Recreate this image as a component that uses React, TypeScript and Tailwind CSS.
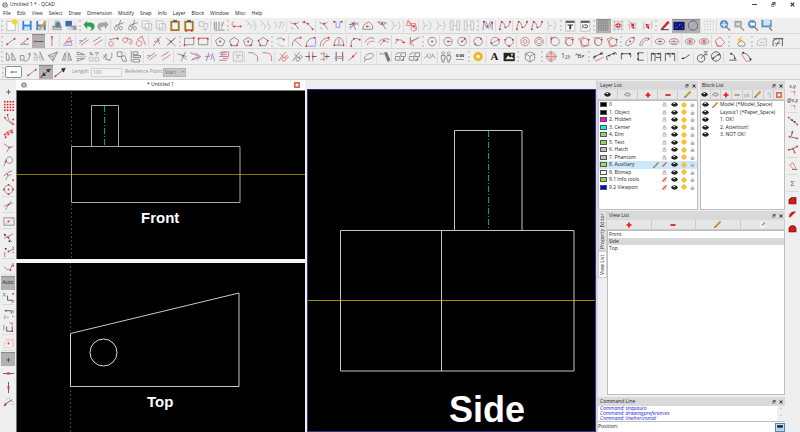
import React from "react";

type Glyph = {
  g?: string;
  l?: string;
  k?: string;
  r?: string;
  b?: string;
  d?: string;
  D?: string;
  f?: [string, string][];
};

const INK: [keyof Glyph, string, number][] = [
  ["l", "#c0c0c0", 1],
  ["g", "#8c8c8c", 1],
  ["k", "#5a5a5a", 1],
  ["b", "#9090f4", 1],
  ["r", "#ee7474", 1],
  ["d", "#f02828", 2],
  ["D", "#3a3a3a", 2],
];

const clip: Glyph["f"] = [
  ["#a8782a", "M2 2h10v11h-10z"],
  ["#f4f4f4", "M4 4h6v7h-6z"],
  ["#5e5e5e", "M5 1h4v2h-4z"],
];
const pentagon = "M7 2.500l5 3.500l-2 5.500h-6l-2-5.500z";
const circle = "M7 2.500a4.500 4.500 0 1 0 .01 0z";

const ICONS: Record<string, Glyph> = {
  new: { f: [["#bdbdbd", "M2 2h10v11h-10z"], ["#fbfbfb", "M3 3h8v9h-8z"], ["#f0dc28", "M11 0a3 3 0 1 0 .01 0z"]] },
  save: { f: [["#3f83d6", "M2 2h10v10h-10z"], ["#f4f8ff", "M4 2h6v4h-6z"], ["#cfe0f5", "M4 8h6v4h-6z"]] },
  saveAs: { f: [["#3f83d6", "M2 2h10v10h-10z"], ["#f4f8ff", "M4 2h6v4h-6z"], ["#cfe0f5", "M4 8h6v4h-6z"], ["#e8a020", "M5 10l6-8l2 1l-6 8l-2 1z"]] },
  print: { f: [["#9a9a9a", "M2 7h10v5h-10z"], ["#cfcfcf", "M4 1h6v6h-6z"], ["#5c88a8", "M8 3a3 3 0 1 0 .01 0z"], ["#e8e8e8", "M3 10h8v1h-8z"]] },
  preview: { f: [["#3d6da8", "M1 2h7v6h-7z"], ["#9d9d9d", "M6 7h7v5h-7z"], ["#d5d5d5", "M3 9h6v3h-6z"]] },
  undo: { f: [["#2e9e4c", "M1 6l4-4v2c5-1 8 1 8 4c0 3-3 5-5 4c3-1 3-4-3-4v3z"]] },
  redo: { f: [["#a6a6a6", "M13 6l-4-4v2c-5-1-8 1-8 4c0 3 3 5 5 4c-3-1-3-4 3-4v3z"]] },
  cut: { g: "M9 1l-3 8M3 7l9-3M4 8a2 2 0 1 0 .01 0zM9 8a1.500 2 0 1 0 .01 0z" },
  copy: { l: "M2 2h7v8h-7zM5 5h7v7h-7z", f: [["#f8f8f8", "M3 3h6v6h-6z"]] },
  paste: { f: clip },
  pasteAt: { f: clip, d: "M4 13h0M10 13h0" },
  link: { l: "M3 3h5v5h-5zM8 5h4v4M6 11l5 0M9 9l2 2l-2 2" },
  prefs: { g: "M2 3v8M4 3v8M7 3v8M2 12h11M12 3l-2 5", l: "M10 3v8" },
  hook: { r: "M4 3c-3 0-3 5 0 5h8", d: "M4 8h0M11 8h0" },
  curves: { l: "M2 2c3 1 3 3 1 5M5 5c3 1 3 3 1 6M9 2c3 1 2 4 0 6M12 6c1 2 0 4-1 6" },
  curves2: { l: "M2 3c3 2 3 4 1 7M7 4l3-1l-3 7M11 3c2 3 1 5-1 7" },
  trimY: { g: "M2 3c2 3 7 3 9 0M7 5l4 6", d: "M7 5h0", b: "M3 9l2 2" },
  trimX: { g: "M1 4c5-1 8 3 11 7", d: "M7 5h0M3 3h0M12 11h0" },
  trimU: { b: "M2 3h3v6h4v-6h3", d: "M3 3h0M11 3h0" },
  polyA: { g: "M2 9l10-5M5 3l4 9", k: "M2 6l5-1", b: "M3 11l5-8l4 4", d: "M7 5h0" },
  polyB: { g: "M1 11l2-5l5-3l4 4v4z", b: "M5 8h4", d: "M6 8h0" },
  polyC: { g: "M2 3l9 1M3 3c2 4 5 4 9 1M8 6l3 5", d: "M7 5h0" },
  brackets: { l: "M2 2c3 3 3 7 0 10M5 7h3M9 2c3 3 3 7 0 10" },
  boxes: { l: "M2 2h3v10h-3zM5 7h4M9 2h3v10h-3z" },
  shapes: { r: "M3 1l4 6h-6zM9 7a3 3 0 1 0 .01 0zM5 5h6v4", g: "M3 3l9 9", d: "M9 8h0" },
  spline: { g: "M2 12c1-12 3-12 5-4c2 5 3-1 5-5v9", b: "M3 2l3 8l5-8", d: "M3 3h0M7 8h0M12 4h0" },
  spline2: { g: "M2 11c1-10 4-9 5-4c2 4 4 2 6-4", d: "M2 11h0M4 3h0M8 9h0M13 3h0" },
  textTop: { l: "M2 2h10v11h-10z", f: [["#fff", "M3 3h8v9h-8z"], ["#333", "M2 2h10v2h-10zM4 6h6v1h-6zM6 7h2v4h-2z"]] },
  textMid: { l: "M2 2h10v11h-10z", f: [["#fff", "M3 3h8v9h-8z"], ["#333", "M2 2h10v2h-10zM4 6h1v4h-1zM6 6h4v1h-4zM6 9h4v1h-4zM9 6h1v4h-1z"]] },
  gridOn: { g: "M2 2v10M4.500 2v10M7 2v10M9.500 2v10M12 2v10M2 2h10M2 4.500h10M2 7h10M2 9.500h10M2 12h10" },
  iso: { l: "M1 3h12M1 7h12M1 11h12M3 1v12M7 1v12M11 1v12", f: [["#e81818", "M5 5l2-1l2 1v1h2v2h-2v1l-2 1l-2-1v-1h-2v-2h2z"]] },
  isoL: { l: "M2 2l10 4M2 6l10 4M4 2v10M10 3v9", f: [["#e81818", "M6 4l3 2v5l-3-2z"]] },
  isoR: { l: "M3 3v9M12 2v9M2 10l10-5", f: [["#e81818", "M5 5l4 1v5l-3-2z"]] },
  redPen: { f: [["#d92222", "M3 10l7-8l2 2l-7 7l-3 1z"], ["#333", "M3 11h8v1h-8z"]] },
  draft: { f: [["#10107a", "M1 3h12v9h-12z"], ["#8fa0ff", "M3 9h1v1h-1zM5 8h1v1h-1zM7 6h1v1h-1zM9 5h1v1h-1zM3 5h1v1h-1zM10 9h1v1h-1z"]] },
  ortho: { k: "M7 2a5 5 0 1 0 .01 0z", b: "M2 12l10-10" },
  dots: { f: [["#aaa", "M2 2h1v1h-1zM5 2h1v1h-1zM8 2h1v1h-1zM11 2h1v1h-1zM2 5h1v1h-1zM5 5h1v1h-1zM8 5h1v1h-1zM11 5h1v1h-1zM2 8h1v1h-1zM5 8h1v1h-1zM8 8h1v1h-1zM11 8h1v1h-1zM2 11h1v1h-1zM5 11h1v1h-1zM8 11h1v1h-1zM11 11h1v1h-1z"]] },
  zoomFit: { f: [["#8b7355", "M8 9l1-1l4 4l-1 1z"], ["#5b8fc8", "M6 1a4.500 4.500 0 1 0 .01 0z"], ["#cfe4f7", "M5 3h2v2h2v2h-2v2h-2v-2h-2v-2h2z"]] },
  zoomSel: { f: [["#8b8b8b", "M8 9l1-1l4 4l-1 1z"], ["#a8a8a8", "M2 2h8v7h-8z"], ["#e0e0e0", "M4 4h4v3h-4z"]] },
  zoomPrev: { f: [["#8b7355", "M8 9l1-1l4 4l-1 1z"], ["#5b8fc8", "M6 1a4.500 4.500 0 1 0 .01 0z"], ["#fff", "M3 5l3-2v1h3v3h-3v1z"]] },
  zoomWin: { f: [["#8b7355", "M9 10l1-1l3 3l-1 1z"], ["#5b8fc8", "M1 1h11v8h-11z"], ["#cfe4f7", "M3 4a4 3 0 1 1 7 1v2h-7z"]] },

  line: { g: "M3 10l8-6", d: "M3 10h0M11 4h0" },
  lineAng: { g: "M2 10h9M3 10l7-6", d: "M10 4h0", r: "M6 8l1 2" },
  lineH: { k: "M3 7h9", d: "M3 7h0" },
  lineV: { g: "M7 2v10", d: "M7 2h0", r: "M7 3v2" },
  lineAngle: { r: "M3 10l6-8l2 8M5 7h6", b: "M2 11h10M5 9l7-3" },
  para: { g: "M2 9l8-6", r: "M4 11l8-6", b: "M2 6h3" },
  para2: { g: "M2 7l8-5", r: "M3 11l9-6" },
  tanA: { r: "M4 7a2.500 2.500 0 1 0 .01 0z", g: "M2 5l10-2", d: "M11 4h0" },
  tanB: { r: "M4 3a2.500 2.500 0 1 0 .01 0zM10 7a1.500 1.500 0 1 0 .01 0z", g: "M5 3l7 3" },
  tanC: { r: "M5 6a3 3 0 1 0 .01 0zM8 1l4 10", g: "M3 5l6-4" },
  bisA: { g: "M3 12l8-10M10 10l-3-7", r: "M4 7l6-1" },
  bisB: { g: "M2 3l10 9", k: "M3 11l9-8", d: "M7 7h0" },
  rect: { g: "M2 3.500h10v7h-10z", d: "M2 11h0M12 3h0" },
  rectR: { g: "M2 3.500h10v7h-10z", r: "M2 3.500h9", d: "M2 4h0M12 4h0" },
  pentC: { g: pentagon, d: "M7 7h0" },
  pentE: { g: pentagon, d: "M4 11h0M10 11h0" },
  pentD: { g: pentagon, d: "M7 7h0M10 11h0" },
  pentS: { g: pentagon, d: "M2 6h0M12 6h0M4 11h0" },
  arc0: { g: "M3 5c2-3 5-2 7 0", d: "M10 5h0", l: "M3 9l4 3h4" },
  arc1: { g: "M2 12c0-6 4-9 9-9", r: "M4 5l8 7", d: "M11 3h0" },
  arc2: { g: "M2 12c0-6 4-9 9-9", b: "M3 12h9M12 4v7", d: "M11 3h0M2 12h0" },
  arc3: { g: "M2 12c0-6 4-9 9-9", r: "M5 12c0-4 3-6 7-7", d: "M11 3h0" },
  arc4: { g: "M2 11c0-11 10-11 10 0z", r: "M7 4v7", d: "M2 11h0M12 11h0" },
  arc5: { g: "M3 12c-1-8 4-10 9-7", d: "M3 12h0M6 4h0M12 5h0" },
  arcO: { g: "M2 8c2-5 7-6 10-4", r: "M4 11c1-4 5-5 8-4" },
  arcO2: { g: "M1 8c3-4 8-5 12-3", r: "M3 11c2-5 6-5 9-3", d: "M7 6h0" },
  tArc: { g: "M2 9c3-6 7-4 9-1", d: "M11 8h0M4 5h0", r: "M9 8h4" },
  tArc2: { g: "M3 2c0 5 1 8 4 10M3 7l9-4", r: "M4 8l9-6M3 3v8" },
  circC: { g: circle, d: "M7 7h0" },
  circB: { g: circle, b: "M7 7h4", d: "M7 7h0" },
  circR: { g: circle, r: "M7 7l3-3", d: "M7 7h0M10 4h0" },
  circ2: { g: circle, d: "M4 10h0M10 4h0" },
  circD: { g: circle, b: "M3 9l8-4", d: "M3 9h0M11 5h0" },
  circ3: { g: circle, d: "M3 5h0M11 5h0M7 12h0" },
  circO: { r: circle, g: "M7 5a2 2 0 1 0 .01 0z" },
  ringG: { g: circle, r: "M7 4.500a2.500 2.500 0 1 0 .01 0z" },
  circT: { g: circle, r: "M2 2l4 1M3 3v5", d: "M3 4h0" },
  circT2: { g: "M7 3.500a4 4 0 1 0 .01 0z", r: "M2 3h10M4 4c-1 4 0 6 2 7", d: "M11 5h0" },
  circT3: { g: "M8 3.500a4 4 0 1 0 .01 0z", r: "M1 5l6-3M2 4l3 9l8-2", d: "M12 5h0" },
  ell1: { g: "M3 11c-3-2 4-10 8-8c3 2-4 10-8 8z", d: "M7 7h0M11 3h0" },
  ell2: { g: "M3 12c-2-3 4-11 9-8", r: "M5 12c-1-2 3-8 6-6", d: "M12 4h0" },
  ell3: { g: "M7 4c7 0 7 6 0 6c-7 0-7-6 0-6z", b: "M4 7h6", d: "M7 7h0" },
  ell4: { g: "M7 4c7 0 7 6 0 6c-7 0-7-6 0-6z", r: "M3 7h8M7 5v4", b: "M4 10h6" },
  ell5: { g: "M7 4c7 0 7 6 0 6c-7 0-7-6 0-6z", r: "M7 5.500c4 0 4 3 0 3c-4 0-4-3 0-3z", d: "M7 7h0" },
  diamond: { r: "M2 6l5-4l5 6l-4 4h-4z", g: "M2 7l3 5h4" },
  hand: { g: "M5 12l-1-3l4-3l4 3l-1 3z", f: [["#f0c020", "M3 6l6-5l-2 4h3l-6 4l2-3h-3z"]] },
  hatchL: { l: "M2 11l1-5l4-2h5v7zM5 8h5" },
  hatchD: { k: "M2 12v-6l4-2h6v8M2 4h11M5 12l4-6", g: "M4 9h6" },

  move: { g: "M2 3v8h3v-5l-3-3M8 3v8h4l-4-8" },
  rotate: { g: "M2 6h4v5h-4zM6 12c5 0 6-3 6-8M10 5l2-2l1 3" },
  scale: { l: "M2 3v8h3v-5zM8 2v9h4zM3 8h8", g: "M2 3l3 3M8 2l4 9" },
  shear: { g: "M2 6l10-4l-5 10zM2 6l5 1l5-5M7 7v5" },
  mirror: { g: "M2 11l3-8v8zM12 11l-3-8v8z", l: "M7 1v12" },
  flip: { g: "M3 2l8 3h-8zM3 12l8-3h-8z", l: "M1 7h12" },
  arr: { l: "M2 8h4v4h-4zM8 8h4v4h-4z", g: "M3 2l3 3h-3zM8 3h4l-3 3" },
  stretch: { g: "M2 9l3-5v6l5 1M11 3c1 5-1 7-4 8", l: "M2 5l3 6" },
  copyTo: { g: "M2 2h5v5h-5zM6 7l2 5h4l-2-6z", l: "M9 2l3 3" },
  align: { g: "M2 1v12M4 2h5v3h-5zM4 6h8v2h-8zM4 10h7v3h-7z" },
  trimA: { g: "M2 4l10 3M6 12l5-10", b: "M7 7l5 3", d: "M8 6h0" },
  trimB: { g: "M1 3l8 3M2 11l10-4", b: "M6 3l6 4l-4 4", r: "M3 10l7-3" },
  trimC: { g: "M3 12l3-9M2 7h4", b: "M8 11l2-8M10 5l2 7", r: "M5 8l3-3" },
  offset: { g: "M2 3h8M2 7h8M2 11h8", r: "M5 2h7v5h-7zM6 9h6", b: "M3 5h7" },
  number: { l: "M2 2h10v10h-10zM4 4l4 5M9 4l-4 6M5 6h6" },
  bevel: { g: "M2 3h5M12 12v-5", r: "M7 3l5 4" },
  round: { g: "M2 3h4M12 12v-3", r: "M6 3c4 0 6 2 6 6" },
  scis: { g: "M2 12l8-10", r: "M4 4l5 5M8 8a2 2 0 1 0 .01 0zM11 6a1.500 1.500 0 1 0 .01 0z" },
  scisG: { g: "M2 12l8-10M4 4l5 5M8 8a2 2 0 1 0 .01 0zM11 6a1.500 1.500 0 1 0 .01 0z" },
  breakA: { k: "M1 7h4M9 7h4", g: "M5 2v10M9 2v10", d: "M5 7h0M9 7h0" },
  breakB: { r: "M2 4h4M2 10h4", k: "M7 7h5", g: "M6 2v10M9 4v6" },
  breakC: { k: "M4 2v10M11 2v10", b: "M2 9h10", r: "M3 7h9" },
  breakD: { g: "M2 12l10-10", d: "M7 7h0", r: "M5 9l4-4" },
  lasso: { g: "M3 10c-3-2 4-8 8-6c3 4-5 7-8 6zM3 10l-1 3" },
  torch: { f: [["#777", "M6 3l3-1l4 9l-3 2z"], ["#b5b5b5", "M1 3h4l1 2h-5z"]] },
  reorder: { g: "M2 7h5v4h-5zM8 3h5v4h-5zM2 5l3-2h2", k: "M8 11h3v-3" },
  spray: { g: "M1 9l3-3l3 3l3-3l3 3M4 6v-2M10 6v-2M7 4l1 2" },
  people: { g: "M4 2a1.500 1.500 0 1 0 .01 0zM10 2a1.500 1.500 0 1 0 .01 0zM2 6h4v4h-1v3h-2v-3h-1zM8 6h4v4h-1v3h-2v-3h-1z" },
  ring: { f: [["#eeb81c", "M7 2a5 5 0 1 0 .01 0zM7 5a2 2 0 1 1-.01 0z"]] },
  image: { f: [["#222", "M1 3h12v9h-12z"], ["#eee", "M3 10l3-4l2 2l2-1l2 3z"], ["#eee", "M9 4h2v2h-2z"]] },
  cube: { g: "M7 2l5 2v6l-5 3l-5-3v-6zM2 4l5 3l5-3M7 7v6" },
  target: { g: "M7 2a5 5 0 1 0 .01 0z", r: "M1 7h12M7 1v12M7 4a3 3 0 1 0 .01 0z" },
  dimA: { r: "M4 12l9-4", k: "M2 8l10-5M2 7l1 3M11 2l1 3", D: "M4 7h0M10 4h0" },
  dimB: { k: "M2 11l-1-4l9-4M10 2l2 3", D: "M4 6h0M9 4h0" },
  dimC: { k: "M2 10v-6h10v4", D: "M3 4h0M11 4h0" },
  dimD: { k: "M11 3h-6v8h6", D: "M5 4h0M5 10h0" },
  dimE: { k: "M2 12v-9M6 4v8M12 12v-9M2 4h10M7 8h5", D: "M4 4h0M10 4h0" },
  dimF: { k: "M2 12v-9M7 8v-5M12 12v-9M2 4h10", D: "M5 4h0M10 4h0" },
  leader: { k: "M2 9h3l6-4", D: "M4 9h0" },
  dimR: { k: "M6 5a4 4 0 1 0 .01 0zM6 9l6-6M9 2h4M10 5h3" },
  dimDia: { k: "M7 2a5 5 0 1 0 .01 0zM3 9l8-5", D: "M4 9h0M10 5h0" },
  dimAng: { k: "M4 11h8M6 4c3 0 4 3 4 6", D: "M6 4h0M10 9h0" },
  dimArc: { r: "M2 4l5 8h4", k: "M3 3c5 0 8 4 9 9", D: "M4 3h0M12 10h0" },

  plusK: { k: "M7 5v5M4.500 7.500h5" },
  grid9: { d: "M3 3h0M6 3h0M9 3h0M12 3h0M3 6h0M6 6h0M9 6h0M12 6h0M3 9h0M6 9h0M9 9h0M12 9h0M3 12h0M6 12h0M9 12h0M12 12h0" },
  snapEnd: { g: "M6 2c0 5 3 8 6 9M3 6l8 6", d: "M6 2h0M12 7h0M12 12h0M3 5h0" },
  snapOn: { r: "M2 9c2-3 6-5 10-6M3 12c1-4 4-6 9-7", d: "M3 8h0M6 6h0M10 4h0M4 11h0M7 8h0M11 6h0" },
  snapPerp: { g: "M2 3l6 4l4-1M8 7l-3 5", d: "M8 7h0" },
  snapTan: { g: "M8 2a3.500 3.500 0 1 0 .01 0zM2 12l3-7", d: "M4 7h0" },
  snapMid: { g: "M2 8c2-4 6-5 9-6M4 12c1-4 3-5 6-6", d: "M6 6h0M12 12h0" },
  snapCen: { g: circle, d: "M7 7h0M7 2h0M7 12h0M2 7h0M12 7h0" },
  snapInt: { g: "M2 8l10-4M4 12c1-4 4-7 6-10", d: "M7 6h0" },
  snapRef: { g: "M2 3h11v8h-11z", l: "M3 10l8-6", d: "M7 7h0" },
  snapX: { g: "M2 8l10-5M2 3l9 9", D: "M3 4h0M8 11h0", d: "M7 7h0" },
  snap12: { g: "M7 7l4-2M3 8v5M2 9l1-1M11 2l2 1l-2 2h2M11 8h2", D: "M4 4h0", d: "M7 7h0" },
  snapD: { g: "M2 6l3 3M5 9h3M9 9l3-7", d: "M9 10h0M12 5h0" },
  xy: { k: "M6 5v5h6", g: "M1 2l3 4M4 2l-3 4M10 10l3 3M13 10l-3 3", d: "M12 3h0" },
  polar: { k: "M4 4h6v3", g: "M3 9v4M5 11h2M12 3v4M11 10h2", d: "M4 4h0" },
  polar2: { k: "M5 6v5h6v-5", g: "M2 4v6M8 2h3v3", d: "M11 11h0" },
  lockRel: { d: "M7 7h0", f: [["#f8c8c8", "M4 2h9v9h-2v-7h-7zM2 5h7v1h-6v5h6v1h-7z"]] },
  resH: { k: "M1 7h12", d: "M7 7h0M6 7h2" },
  resV: { k: "M7 1v12", d: "M7 7h0M7 6v2" },
  resA: { k: "M3 10l8-5", l: "M4 2l2 3M8 2v3M13 10h-3M12 7h-2", d: "M3 11h0M4 10h0" },
  distA: { k: "M3 4l8 6", d: "M2 3h0M12 11h0", D: "M6 6h0M9 8h0" },
  distB: { k: "M3 9l9 2M7 2l-2 6", d: "M3 9h0M12 11h0M6 4h0" },
  distC: { k: "M2 8l4-1l6-3M7 7l2 4", d: "M2 8h0M12 4h0M7 7h0M9 11h0" },
  angM: { r: "M3 6l4-3l4 8M3 6l5 5", k: "M6 11h6" },
  areaA: { f: [["#222", "M1 13v-7l4-4h8v11z"], ["#ee1111", "M2 12v-5l4-4h6v9z"]] },
  areaB: { f: [["#ee1111", "M2 11c0-6 4-9 10-8l-9 9z"]], k: "M2 11c0-6 4-9 10-8" },
  areaC: { f: [["#222", "M1 13v-6c1-7 11-7 12 0v6z"], ["#ee1111", "M2 12v-5c1-5 9-5 10 0v5z"]] },
  coordA: { r: "M3 4.500h7v7", d: "M10 5h0" },
  shape: { k: "M4 7h7", d: "M4 7h0" },
  arrows: { k: "M2 11l10-8", f: [["#111", "M3 11l1-4l3 3zM12 3l-5 1l3 3z"]], d: "M2 12h0" },
  arrowEnd: { k: "M2 11l10-8", f: [["#111", "M13 2l-5 1l3 4z"]], d: "M2 11h0" },
  eye: { f: [["#262626", "M0 7c4-6 10-6 14 0c-4 6-10 6-14 0z"], ["#fff", "M5 4h3v2h-3z"]] },
  eyeOff: { f: [["#a9a9a9", "M0 7c4-6 10-6 14 0c-4 6-10 6-14 0z"], ["#e9e9e9", "M4 6h6v2h-6z"]] },
  plus: { f: [["#dd1a1a", "M5 1h4v4h4v4h-4v4h-4v-4h-4v-4h4z"]] },
  minus: { f: [["#dd1a1a", "M1 5h12v4h-12z"]] },
  minusG: { f: [["#999", "M1 5h12v4h-12z"]] },
  pencil: { f: [["#c99335", "M2 10l8-9l3 3l-8 8z"], ["#5b4326", "M2 10l3 2l-5 2z"], ["#d86464", "M10 1l3 3l1-2l-2-2z"]] },
  pencilBox: { f: [["#fafafa", "M3 2h8v11h-8z"], ["#c99335", "M5 8l5-6l3 2l-6 6z"]] },
  ab: { g: "M1 6h4v5h-4zM8 2v9h4v-5h-4" },
  insert: { g: "M3 2h7v10h-3M4 5h3" },
  close: { f: [["#e2694b", "M0 0h14v14h-14z"], ["#fff", "M4 4h6v6h-6z"]] },
  printer: { f: [["#c5c5c5", "M3 1h8v5h2v7h-12v-7h2z"], ["#fff", "M4 8h6v2h-6z"]] },
  noPrint: { f: [["#dcdcdc", "M3 1h8v5h2v7h-12v-7h2z"], ["#e33", "M0 12l12-12l2 2l-12 12z"]] },
  sun: { f: [["#f4c238", "M6 0h2l1 3l3-1l-1 3l3 1v2l-3 1l1 3l-3-1l-1 3h-2l-1-3l-3 1l1-3l-3-1v-2l3-1l-1-3l3 1z"]] },
  lock: { f: [["#b5b5b5", "M2 6h10v8h-10z"]], l: "M4 6v-4h6v4" },
  float: { f: [["#333", "M4 1h9v8h-3v-1h2v-4h-7v1h-1zM1 5h8v8h-8zM2 8v4h6v-4z"]] },
  x: { f: [["#222", "M1 3l2-2l4 4l4-4l2 2l-4 4l4 4l-2 2l-4-4l-4 4l-2-2l4-4z"]] },
  keyboard: { f: [["#111", "M2 4h10v4h-10z"], ["#6fa2d6", "M2 10h10v1h-10z"]] },
  logo: { f: [["#4b5878", "M7 1a6 6 0 1 0 .01 0z"], ["#e9edf6", "M7 3a4 4 0 1 0 .01 0z"], ["#4468b0", "M6 5h2v4h-2z"], ["#e5a03a", "M8 8l2-1l4 5l-2 1z"]] },
};

function Icon({ name, className }: { name: string; className: string }) {
  const g = ICONS[name];
  return (
    <svg viewBox="0 0 14 14" aria-hidden="true" className={className}>
      {g.f?.map(([c, d], i) => <path key={i} d={d} fill={c} fillRule="evenodd" />)}
      {INK.map(([k, c, w]) =>
        g[k] ? (
          <path key={k} d={g[k] as string} fill="none" stroke={c} strokeWidth={w} strokeLinecap={w > 1 ? "round" : "butt"} />
        ) : null
      )}
    </svg>
  );
}

const PRESSED = "bg-[#b2b2b2] shadow-[inset_0_1px_1px_#888]";

/* Glyphs that are set as type rather than drawn */
const LETTERS: Record<string, { text: string; cls: string }> = {
  "#A": { text: "A", cls: "font-['Liberation_Serif',serif] text-[11px] font-bold" },
  "#123": { text: "1₂₃", cls: "text-[7px] text-[#444]" },
  "#abc": { text: "ᴬBᴘ", cls: "text-[6px] text-[#444]" },
  "#0.00": { text: "0.00", cls: "text-[4px] font-bold border-b border-[#99a]" },
};

function Tool({ name, pressed }: { name: string; pressed?: boolean }) {
  const t = LETTERS[name];
  return (
    <button
      aria-label={name}
      className={`flex h-[14px] min-w-0 flex-1 items-center justify-center ${pressed ? PRESSED : ""}`}
    >
      {t ? <span className={t.cls}>{t.text}</span> : <Icon name={name} className="h-[13px] w-full shrink-0" />}
    </button>
  );
}

/* "|" is a separator; a leading "*" marks a pressed tool */
function Group({ items, width }: { items: string; width: string }) {
  return (
    <div className={`flex shrink-0 items-center ${width}`}>
      <span className="mr-px ml-px h-[11px] w-[2px] shrink-0 border-l-2 border-dotted border-[#cfcfcf]" />
      {items.split(" ").map((n, i) =>
        n === "|" ? (
          <span key={i} className="h-3 w-[2px] shrink-0 border-l border-[#dadada]" />
        ) : (
          <Tool key={i} name={n.replace("*", "")} pressed={n.startsWith("*")} />
        )
      )}
    </div>
  );
}

const ROW1: [string, string][] = [
  ["w-[78px]", "new | save saveAs | print preview"],
  ["w-[148px]", "undo redo | cut cut copy copy paste pasteAt link | prefs"],
  ["w-[250px]", "hook curves curves curves2 | trimY trimX | trimY trimU | polyA polyB polyC brackets | shapes | brackets brackets boxes boxes"],
  ["w-[83px]", "spline | spline2 | spline2 spline2 brackets"],
  ["w-[33px]", "textTop textMid"],
  ["w-[62px]", "*gridOn iso isoL isoR"],
  ["w-[120px]", "redPen *draft *ortho | dots | zoomFit zoomSel zoomPrev zoomWin"],
];
const ROW2: [string, string][] = [
  ["w-[178px]", "line lineAng *lineH lineV | lineAngle | para para2 | tanA tanB tanC | bisA bisB"],
  ["w-[92px]", "rect rectR | pentC pentE pentD pentS"],
  ["w-[151px]", "arc0 | arc1 arc2 arc3 arc4 | arc5 | arcO arcO2 | tArc tArc2"],
  ["w-[198px]", "circC | circB circR | circ2 | circD circ3 | circO ringG | circT circT2 circT3 circT2 circT3"],
  ["w-[108px]", "ell1 ell2 | ell3 ell4 | ell5 ell5 | diamond"],
  ["w-[23px]", "hand"],
  ["w-[35px]", "hatchL hatchD"],
];
const ROW3: [string, string][] = [
  ["w-[467px]", "move rotate scale shear mirror flip arr stretch copyTo align | para para2 | trimA trimB trimC offset number | bevel round | scis scisG breakA breakB breakC breakD | lasso | torch | reorder reorder | spray | people #0.00"],
  ["w-[49px]", "ring | #A image"],
  ["w-[24px]", "cube"],
  ["w-[47px]", "target #123 #abc"],
  ["w-[166px]", "dimA dimB dimC dimD | dimE dimF | leader | dimR dimDia | dimAng dimArc"],
];

function ToolRow({ groups, height }: { groups: [string, string][]; height: string }) {
  return (
    <div className={`flex items-center overflow-hidden border-b border-[#d6d6d6] ${height}`}>
      {groups.map(([w, items], i) => <Group key={i} width={w} items={items} />)}
    </div>
  );
}

const MENUS = ["File", "Edit", "View", "Select", "Draw", "Dimension", "Modify", "Snap", "Info", "Layer", "Block", "Window", "Misc", "Help"];

const SNAPS = "plusK grid9 snapEnd snapOn snapPerp snapTan snapMid snapCen | snapInt | snapRef | snapX snap12 | snapD | *auto xy | polar polar2 | lockRel | *plusK resH resV resA".split(" ");

const LAYERS: [string, string, string][] = [
  ["0", "bg-black", "printer"],
  ["1. Object", "bg-black", "printer"],
  ["2. Hidden", "bg-[#ff00ff]", "printer"],
  ["3. Center", "bg-[#00f0f0]", "printer"],
  ["4. Dim", "bg-[#92d36e]", "printer"],
  ["5. Text", "bg-[#92d36e]", "printer"],
  ["6. Hatch", "bg-[#bdbdbd]", "printer"],
  ["7. Phantom", "bg-[#bdbdbd]", "printer"],
  ["8. Auxiliary", "bg-[#a9dc4a]", "noPrint"],
  ["9. Bitmap", "bg-white", "printer"],
  ["9.1 Info tools", "bg-[#92d36e]", "noPrint"],
  ["9.2 Viewport", "bg-[#0000ff]", "noPrint"],
];

const BLOCKS = ["Model (*Model_Space)", "Layout1 (*Paper_Space)", "1. OK!", "2. Attention!", "3. NOT OK!"];

function DockTitle({ title }: { title: string }) {
  return (
    <header className="flex h-[9px] shrink-0 items-center gap-[3px] bg-[#d9d9d9] px-[2px]">
      <h2 className="flex-1">{title}</h2>
      <button aria-label="Float"><Icon name="float" className="size-[4px]" /></button>
      <button aria-label="Close"><Icon name="x" className="size-[4px]" /></button>
    </header>
  );
}

function DockTools({ names }: { names: string[] }) {
  return (
    <div className="flex h-[10px] shrink-0 bg-[#e6e6e6]">
      {names.map((n, i) => (
        <button key={i} aria-label={n} className="flex flex-1 items-center justify-center border-r border-b border-[#cacaca]">
          <Icon name={n} className={n.startsWith("eye") || n.startsWith("pencil") ? "size-[7px]" : "size-[6px]"} />
        </button>
      ))}
    </div>
  );
}

const LIST = "border border-[#bdbdbd] bg-white";

function LayerDock() {
  return (
    <section className="flex w-[100px] flex-col">
      <DockTitle title="Layer List" />
      <DockTools names={["eye", "eyeOff", "plus", "minus", "pencil"]} />
      <div className={`flex-1 ${LIST}`}>
        <table className="h-[90px] w-full border-collapse">
          <tbody>
            {LAYERS.map(([name, color, print]) => {
              const on = name.startsWith("8.");
              return (
                <tr key={name} className={on ? "bg-[#cce8ff]" : ""}>
                  <td className="w-[9px] p-0 pl-px"><span className={`block h-[5px] w-[7px] border border-[#555] ${color}`} /></td>
                  <td className="p-0 pl-px leading-[7px] whitespace-nowrap">{name}</td>
                  <td className="w-[9px] p-0">{on && <Icon name="pencil" className="size-[6px]" />}</td>
                  <td className="w-[9px] p-0"><Icon name={print} className="size-[5px]" /></td>
                  <td className="w-[10px] p-0"><Icon name="eye" className="size-[7px]" /></td>
                  <td className="w-[9px] p-0"><Icon name="sun" className="size-[6px]" /></td>
                  <td className="w-[7px] p-0"><Icon name="lock" className="size-[5px]" /></td>
                </tr>
              );
            })}
          </tbody>
        </table>
      </div>
    </section>
  );
}

function BlockDock() {
  return (
    <section className="flex flex-1 flex-col">
      <DockTitle title="Block List" />
      <DockTools names={["eye", "eyeOff", "plus", "minusG", "ab", "pencil", "insert", "close"]} />
      <div className={`flex-1 ${LIST}`}>
        <ul className="flex h-[37px] flex-col justify-between">
          {BLOCKS.map((b, i) => (
            <li key={b} className="flex items-center leading-[7px] whitespace-nowrap">
              <Icon name="eye" className="ml-px size-[7px]" />
              <span className="w-[11px] pl-[3px]">{i === 0 && <Icon name="pencil" className="size-[6px]" />}</span>
              {b}
            </li>
          ))}
        </ul>
      </div>
    </section>
  );
}

function ViewDock() {
  const tab = "flex w-[9px] items-center justify-center border border-[#cfcfcf] [writing-mode:vertical-rl] rotate-180 whitespace-nowrap";
  return (
    <section className="flex min-h-0 flex-1">
      <div className="flex flex-col" role="tablist">
        <button role="tab" className={`h-[40px] bg-[#e6e6e6] ${tab}`}>Property Editor</button>
        <button role="tab" aria-selected="true" className={`h-[27px] bg-white ${tab}`}>View List</button>
      </div>
      <div className="flex flex-1 flex-col">
        <DockTitle title="View List" />
        <DockTools names={["plus", "minus", "pencil", "pencilBox"]} />
        <ul className={`flex-1 leading-[7px] ${LIST}`}>
          <li className="pl-px">Front</li>
          <li className="bg-[#d9d9d9] pl-px">Side</li>
          <li className="pl-px">Top</li>
        </ul>
      </div>
    </section>
  );
}

function CommandDock() {
  return (
    <section className="flex flex-col">
      <DockTitle title="Command Line" />
      <div className="flex h-[16px] overflow-hidden border-b border-[#bdbdbd] bg-white pl-[2px]">
        <div className="flex-1 text-[#2222dd] italic leading-[5px]">
          <p>Command: snapauto</p>
          <p>Command: drawingpreferences</p>
          <p>Command: linehorizontal</p>
        </div>
        <div className="flex w-[8px] flex-col items-center justify-around bg-[#f0f0f0]">
          <button aria-label="Scroll up" className="leading-[6px]">˄</button>
          <button aria-label="Scroll down" className="leading-[6px]">˅</button>
        </div>
      </div>
      <div className="flex h-[10px] items-center bg-white">
        <label htmlFor="pos">Position:</label>
        <input id="pos" className="min-w-0 flex-1 outline-none" />
        <button aria-label="Keyboard" className="flex h-[9px] w-[10px] items-center justify-center border border-[#4a86c0] bg-[#bfdcf4]">
          <Icon name="keyboard" className="size-[8px]" />
        </button>
      </div>
    </section>
  );
}

const RIGHT_TOOLS = "| distA distB distC | angM |".split(" ");

const viewText = "fill-white font-['Liberation_Sans',Arial,sans-serif] font-bold";

export default function App() {
  return (
    <div className="flex h-screen flex-col overflow-hidden bg-[#efefef] font-['Open_Sans','Noto_Sans',sans-serif] text-[5px] text-[#1c1c1c]">
      <header className="flex h-[9px] shrink-0 items-center bg-white pl-[2px]">
        <Icon name="logo" className="size-[6px]" />
        <h1 className="flex-1 pl-[2px]">Untitled 1 * - QCAD</h1>
        <div className="flex gap-[14px] pr-[5px]">
          <button aria-label="Minimize" className="h-[3px] w-[5px] border-b border-[#444]" />
          <button aria-label="Restore"><Icon name="float" className="size-[5px]" /></button>
          <button aria-label="Close window"><Icon name="x" className="size-[5px]" /></button>
        </div>
      </header>
      <nav className="flex h-[9px] shrink-0 items-center gap-[6px] bg-white pl-[3px]">
        {MENUS.map((m) => <button key={m}>{m}</button>)}
      </nav>
      <ToolRow groups={ROW1} height="h-[16px] shrink-0" />
      <ToolRow groups={ROW2} height="h-[15px] shrink-0" />
      <ToolRow groups={ROW3} height="h-[16px] shrink-0" />
      <form className="flex h-[15px] shrink-0 items-center border-b border-[#cfcfcf] pl-[2px] text-[#8f8f8f]" onSubmit={(e) => e.preventDefault()}>
        <span className="h-[11px] w-[3px] border-l-2 border-dotted border-[#cfcfcf]" />
        <button aria-label="Tool" className="flex h-[12px] w-[17px] items-center justify-center rounded-[2px] border border-[#8f8f8f] bg-white">
          <Icon name="shape" className="size-[12px]" />
        </button>
        <div className="flex w-[45px] shrink-0 pl-[3px]">
          <Tool name="line" />
          <Tool name="arrows" pressed />
          <Tool name="arrowEnd" />
        </div>
        <label htmlFor="len" className="w-[24px] shrink-0 pl-[5px]">Length:</label>
        <input id="len" defaultValue="100" className="h-[9px] w-[31px] border border-[#d2d2d2] bg-[#f3f3f3] pl-px" />
        <label htmlFor="ref" className="w-[41px] shrink-0 pl-[3px] whitespace-nowrap">Reference Point:</label>
        <span className="relative flex">
          <select id="ref" className="h-[9px] w-[23px] appearance-none border border-[#b4b4b4] bg-[#c8c8c8] pl-px text-[#777]">
            <option>Start</option>
          </select>
          <span className="pointer-events-none absolute top-px right-[2px] text-[4px]">▾</span>
        </span>
      </form>

      <div className="flex min-h-0 flex-1">
        <aside className="flex w-[16px] shrink-0 flex-col items-center pt-[4px]">
          {SNAPS.map((n, i) =>
            n === "|" ? (
              <span key={i} className="mb-px h-px w-[12px] shrink-0 bg-[#dadada]" />
            ) : n === "*auto" ? (
              <button key={i} className={`h-[14px] w-[14px] shrink-0 ${PRESSED}`}>Auto</button>
            ) : (
              <button
                key={i}
                aria-label={n}
                className={`flex h-[14px] w-[14px] shrink-0 items-center justify-center ${n.startsWith("*") ? PRESSED : ""}`}
              >
                <Icon name={n.replace("*", "")} className="size-[13px]" />
              </button>
            )
          )}
        </aside>

        <main className="grid min-w-0 flex-1 grid-cols-2 gap-[2px]">
          <div className="flex min-h-0 flex-col">
            <div className="flex h-[10px] shrink-0 items-center bg-white px-[5px]">
              <Icon name="logo" className="size-[6px]" />
              <span className="flex-1 text-center">* Untitled 1</span>
              <button aria-label="Close tab"><Icon name="close" className="size-[6px]" /></button>
            </div>
            <div className="grid min-h-0 flex-1 grid-rows-2 gap-[4px] bg-[#f4f4f4]">
              <svg viewBox="17 91 288 168" preserveAspectRatio="xMinYMin slice" className="h-full min-h-0 w-full border-t border-l border-[#777] bg-black">
                <path d="M0 174.500H400" stroke="#857a00" />
                <path d="M71.500 80V270" stroke="#5a3a10" strokeDasharray="2 2" />
                <path d="M71.500 146.500H240V202.500H71.500zM91.500 146V105.500H118.500V146" fill="none" stroke="#a8a8a8" />
                <path d="M104.500 106V146" stroke="#00a0a0" strokeDasharray="6 2 1 2" />
                <text x="141" y="223" fontSize="15" className={viewText}>Front</text>
              </svg>
              <svg viewBox="17 263 288 169" preserveAspectRatio="xMinYMin slice" className="h-full min-h-0 w-full border-l border-[#777] bg-black">
                <path d="M70.500 250V440" stroke="#5a3a10" strokeDasharray="2 2" />
                <path d="M70.500 333.500L239 293V386.500H70.500z" fill="none" stroke="#c9c9c9" />
                <path d="M70.500 334V386" stroke="#e9e0a0" strokeDasharray="2 2" />
                <circle cx="103.500" cy="352.500" r="13.500" fill="none" stroke="#dcdcdc" />
                <text x="147" y="407" fontSize="15" className={viewText}>Top</text>
              </svg>
            </div>
          </div>
          <div className="flex min-h-0 flex-col pt-[9px]">
            <svg viewBox="308 90 287 341" preserveAspectRatio="xMinYMin slice" className="min-h-0 w-full flex-1 border border-[#33338c] bg-black">
              <path d="M200 300.500H700" stroke="#969000" />
              <path d="M340.500 230.500H574V371H340.500zM441.500 230V371M454.500 230V130.500H522V230" fill="none" stroke="#c4c4c4" />
              <path d="M488.500 131V229" stroke="#00a0a0" strokeDasharray="6 2 1 2" />
              <text x="449" y="422" fontSize="36" className={viewText}>Side</text>
            </svg>
          </div>
        </main>

        <div className="flex w-[189px] shrink-0 flex-col border-l-2 border-[#d4d4ea] pt-px">
          <div className="flex h-[129px] shrink-0 gap-[2px]">
            <LayerDock />
            <BlockDock />
          </div>
          <div className="flex min-h-0 flex-1 flex-col gap-[2px] pt-px">
            <ViewDock />
            <CommandDock />
          </div>
        </div>

        <aside className="flex w-[15px] shrink-0 flex-col items-center pt-[3px]">
          {["x,y", "@x,y"].map((t) => (
            <button key={t} className="flex h-[14px] flex-col items-center leading-[6px]">
              {t}
              <Icon name="coordA" className="size-[8px]" />
            </button>
          ))}
          {RIGHT_TOOLS.map((n, i) =>
            n === "|" ? (
              <span key={i} className="my-px h-px w-[11px] bg-[#dadada]" />
            ) : (
              <button key={i} aria-label={n} className="flex h-[14px] items-center"><Icon name={n} className="size-[12px]" /></button>
            )
          )}
          <button className="h-[14px] text-[8px] leading-none text-[#666]">Σ</button>
          <span className="my-px h-px w-[11px] bg-[#dadada]" />
          {["areaA", "areaB", "areaC"].map((n) => (
            <button key={n} aria-label={n} className="flex h-[14px] items-center"><Icon name={n} className="size-[9px]" /></button>
          ))}
        </aside>
      </div>
    </div>
  );
}
